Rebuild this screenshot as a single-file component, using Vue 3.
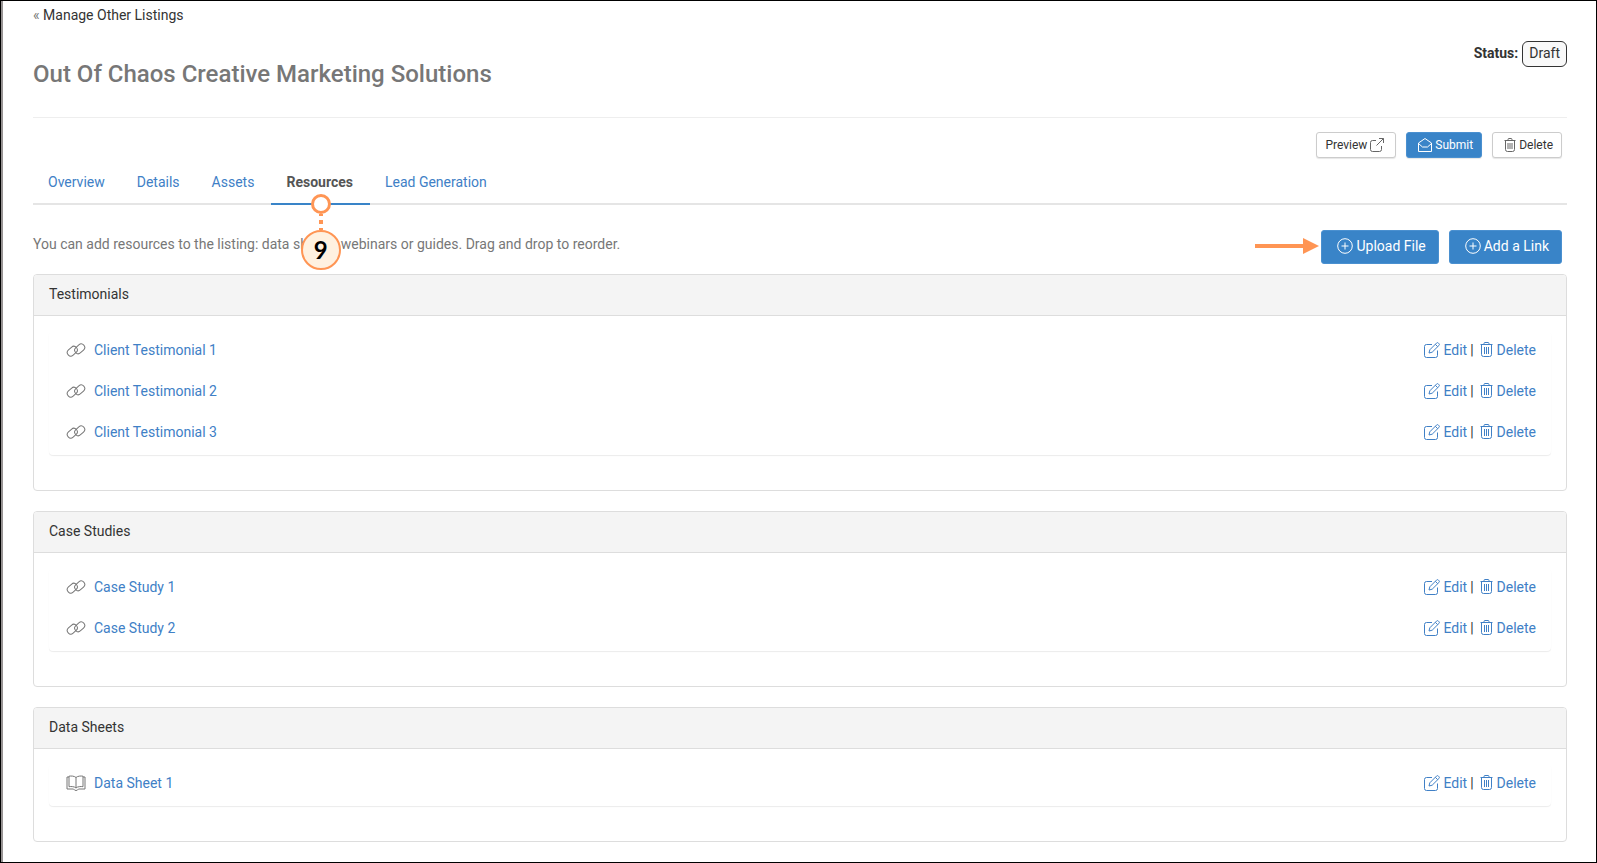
<script setup>
const tabs = ['Overview', 'Details', 'Assets', 'Resources', 'Lead Generation']
const activeTab = 'Resources'

const groups = [
  {
    title: 'Testimonials',
    icon: 'link',
    items: ['Client Testimonial 1', 'Client Testimonial 2', 'Client Testimonial 3'],
  },
  { title: 'Case Studies', icon: 'link', items: ['Case Study 1', 'Case Study 2'] },
  { title: 'Data Sheets', icon: 'book', items: ['Data Sheet 1'] },
]
</script>

<template>
  <div class="page">
    <nav class="back"><span class="laquo">«</span> <a href="#">Manage Other Listings</a></nav>

    <header class="head">
      <h1>Out Of Chaos Creative Marketing Solutions</h1>
      <div class="status"><strong>Status:</strong> <span class="badge">Draft</span></div>
    </header>

    <div class="actions">
      <button type="button" class="btn small preview">
        Preview
        <svg class="ico14" viewBox="0 0 14 14"><path d="M6 2.5H2.5a2 2 0 0 0-2 2v7a2 2 0 0 0 2 2h7a2 2 0 0 0 2-2V8M9 .5h4.500V5M13.500.5 6.500 7.500" /></svg>
      </button>
      <button type="button" class="btn small primary submit">
        <svg class="ico14" viewBox="0 0 14 14"><path d="M.5 5 7 .5 13.500 5v8.500H.5zM.5 5.500l4 3.500h5l4-3.500" /></svg>
        Submit
      </button>
      <button type="button" class="btn small remove">
        <svg class="ico-trash-small" viewBox="0 0 12 14"><path d="M.5 2.500h11M4 2.500V1.500a1 1 0 0 1 1-1h2a1 1 0 0 1 1 1v1M1.500 2.500v9a2 2 0 0 0 2 2h5a2 2 0 0 0 2-2v-9M4 5v6M6 5v6M8 5v6" /></svg>
        Delete
      </button>
    </div>

    <nav class="tabs">
      <a v-for="t in tabs" :key="t" href="#" class="tab" :class="{ active: t === activeTab }">
        {{ t }}
        <span v-if="t === activeTab" class="callout">
          <span class="ring"></span>
          <span class="dots"></span>
          <span class="step">9</span>
        </span>
      </a>
    </nav>

    <div class="toolbar">
      <p>You can add resources to the listing: data sheets, webinars or guides. Drag and drop to reorder.</p>
      <div class="adders">
        <svg class="arrow" viewBox="0 0 64 16"><path d="M0 6h48V0l16 8-16 8v-6H0z" /></svg>
        <button type="button" class="btn primary large">
          <svg class="ico16" viewBox="0 0 16 16"><circle cx="8" cy="8" r="7.300" /><path d="M8 4.500v7M4.500 8h7" /></svg>
          Upload File
        </button>
        <button type="button" class="btn primary large">
          <svg class="ico16" viewBox="0 0 16 16"><circle cx="8" cy="8" r="7.300" /><path d="M8 4.500v7M4.500 8h7" /></svg>
          Add a Link
        </button>
      </div>
    </div>

    <section v-for="g in groups" :key="g.title" class="panel">
      <h2>{{ g.title }}</h2>
      <div class="body">
        <ul>
          <li v-for="item in g.items" :key="item">
            <svg v-if="g.icon === 'link'" class="ico-kind" viewBox="0 0 20 16">
              <rect x="-5.500" y="-3.500" width="11" height="7" rx="3.500" transform="translate(6.300 9.200) rotate(-42)" />
              <rect x="-5.500" y="-3.500" width="11" height="7" rx="3.500" transform="translate(13.700 6.800) rotate(-42)" />
            </svg>
            <svg v-else class="ico-kind" viewBox="0 0 20 16">
              <path d="M10 2.500C8.500 1 5 .8 3 1.200v10.500c2-.4 5.500-.2 7 1.300 1.500-1.500 5-1.700 7-1.300V1.200c-2-.4-5.500-.2-7 1.300zM10 2.500V13M3 2H1v12h6.500q1 1.500 2.500 1.500t2.500-1.500H19V2h-2" />
            </svg>
            <a href="#" class="name">{{ item }}</a>
            <span class="ops">
              <a href="#">
                <svg class="ico-edit" viewBox="0 0 16 16"><path d="M8 2.500H2.500a2 2 0 0 0-2 2v9a2 2 0 0 0 2 2h9a2 2 0 0 0 2-2V8.500M5 11l.8-3.200L12.500 1.100a1.300 1.300 0 0 1 1.900 0l.5.5a1.300 1.300 0 0 1 0 1.900L8.200 10.200zM11.300 2.300l2.400 2.400" /></svg>
                Edit
              </a>
              <span class="bar">|</span>
              <a href="#">
                <svg class="ico-trash" viewBox="0 0 13 15"><path d="M.5 2.500h12M4 2.500V1.500a1 1 0 0 1 1-1h3a1 1 0 0 1 1 1v1M1.500 2.500v10a2 2 0 0 0 2 2h6a2 2 0 0 0 2-2v-10M4.500 5v7M6.500 5v7M8.500 5v7" /></svg>
                Delete
              </a>
            </span>
          </li>
        </ul>
      </div>
    </section>
  </div>
</template>

<style>
body {
  margin: 0;
  background: #fff;
}
</style>

<style scoped>
.page {
  box-sizing: border-box;
  min-height: 100vh;
  padding: 4px 29px 0 32px;
  border: 1px solid #000;
  box-shadow: inset 2px 0 #979393;
  font: 14px/20px Roboto, "Liberation Sans", sans-serif;
  color: #333;
}
a {
  color: #4080c6;
  text-decoration: none;
}
svg {
  flex: none;
  fill: none;
  stroke: currentColor;
  stroke-width: 1;
}
.back a {
  color: #333;
}
.laquo {
  color: #777;
}
.head {
  display: flex;
  justify-content: space-between;
  align-items: flex-start;
  border-bottom: 1px solid #eee;
}
h1 {
  margin: 36px 0 30px;
  font-size: 24px;
  line-height: 26px;
  font-weight: 500;
  color: #777;
}
.status {
  display: flex;
  align-items: baseline;
  gap: 4px;
  margin-top: 16px;
}
.status strong {
  font-weight: 700;
}
.badge {
  padding: 1px 6px 3px;
  border: 1px solid #333;
  border-radius: 6px;
  background: #f9f9f9;
}
.actions {
  display: flex;
  justify-content: flex-end;
  gap: 10px;
  margin: 14px 5px 0 0;
}
.btn {
  display: flex;
  align-items: center;
  gap: 3px;
  box-sizing: border-box;
  border: 1px solid #ccc;
  border-radius: 3px;
  background: #fff;
  color: #333;
  font: inherit;
}
.small {
  height: 26px;
  padding: 0 8px;
  font-size: 12px;
  box-shadow: 0 1px 1px rgba(0, 0, 0, 0.1);
}
.preview {
  padding-right: 11px;
}
.submit,
.remove {
  padding-left: 11px;
}
.preview svg,
.remove svg {
  color: #666;
}
.primary {
  background: #3984c8;
  border-color: #4a90d0;
  color: #fff;
}
.large {
  height: 34px;
  padding: 0 12px 2px 15px;
}
.ico14 {
  width: 14px;
  height: 14px;
}
.ico16 {
  width: 16px;
  height: 16px;
}
.ico-trash {
  width: 13px;
  height: 15px;
  margin-right: 1px;
}
.ico-trash-small {
  width: 12px;
  height: 14px;
}
.ico-edit {
  width: 16px;
  height: 16px;
}
.tabs {
  display: flex;
  margin-top: 5px;
  border-bottom: 2px solid #e5e5e5;
}
.tab {
  position: relative;
  padding: 9px 17px 11px 15px;
  margin-bottom: -2px;
  border-bottom: 2px solid transparent;
}
.tab.active {
  border-color: #3984c8;
  color: #555;
  font-weight: 700;
}
.callout {
  position: absolute;
  z-index: 1;
  top: 31px;
  left: 0;
  right: 0;
  display: flex;
  flex-direction: column;
  align-items: center;
}
.ring {
  box-sizing: border-box;
  width: 20px;
  height: 20px;
  border: 3px solid #ff9554;
  border-radius: 50%;
  background: #fff;
}
.dots {
  width: 4px;
  height: 16px;
  background: repeating-linear-gradient(#ff9554 0 2px, transparent 2px 6px, #ff9554 6px 8px);
}
.step {
  box-sizing: border-box;
  width: 40px;
  height: 40px;
  border: 2px solid #ff9554;
  border-radius: 50%;
  background: #fff1e0;
  color: #000;
  font: 700 24px/36px Lato, sans-serif;
  text-align: center;
}
.toolbar {
  display: flex;
  justify-content: space-between;
  margin: 25px 5px 10px 0;
}
.toolbar p {
  margin: 4px 0 0;
  color: #777;
}
.adders {
  position: relative;
  display: flex;
  gap: 10px;
}
.arrow {
  position: absolute;
  right: 100%;
  top: 8px;
  width: 64px;
  height: 16px;
  margin-right: 2px;
  fill: #ff9554;
  stroke: none;
}
.panel {
  margin-bottom: 20px;
  border: 1px solid #ddd;
  border-radius: 4px;
}
h2 {
  margin: 0;
  padding: 9px 15px 11px;
  border-bottom: 1px solid #ddd;
  border-radius: 3px 3px 0 0;
  background: #f4f4f4;
  font-size: 14px;
  line-height: 20px;
  font-weight: 400;
}
.body {
  padding: 15px;
}
ul {
  margin: 0 0 20px;
  padding: 0 0 1px;
  list-style: none;
  border-radius: 4px;
  box-shadow: 0 1px 1px rgba(0, 0, 0, 0.08);
}
li {
  display: flex;
  align-items: center;
  box-sizing: border-box;
  height: 41px;
  padding: 0 15px 4px 17px;
}
.ico-kind {
  width: 20px;
  height: 16px;
  margin-right: 8px;
  color: #777;
}
.ops {
  display: flex;
  align-items: center;
  gap: 3px;
  margin-left: auto;
}
.ops a {
  display: flex;
  align-items: center;
  gap: 3px;
}
.bar {
  margin-right: 3px;
}
</style>
